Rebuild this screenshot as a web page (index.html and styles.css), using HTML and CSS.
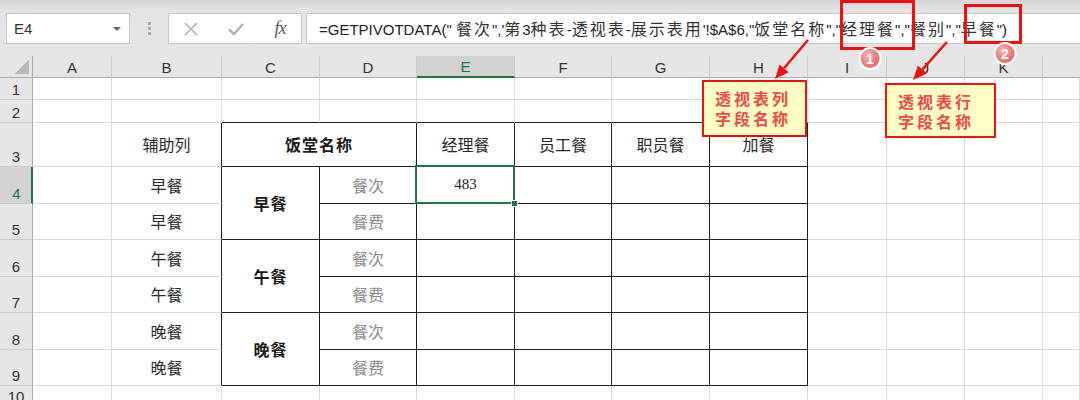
FILE: index.html
```html
<!DOCTYPE html>
<html lang="zh-CN">
<head>
<meta charset="utf-8">
<title>GETPIVOTDATA</title>
<link rel="stylesheet" href="styles.css">
</head>
<body>
<div class="topbar">
  <div class="namebox"><span>E4</span><span class="caret"></span></div>
  <div class="grip"><i></i><i></i><i></i></div>
  <div class="tools">
    <span class="tool"><svg width="16" height="16" viewBox="0 0 16 16"><path d="M2 2L14 14M14 2L2 14" stroke="#b0b0b0" stroke-width="1.6" fill="none"/></svg></span>
    <span class="tool"><svg width="18" height="16" viewBox="0 0 18 16"><path d="M2 8.5L7 13L16 3" stroke="#b0b0b0" stroke-width="2.4" fill="none"/></svg></span>
    <span class="tool fx">fx</span>
  </div>
  <div class="formula">=GETPIVOTDATA(" <span class="cj">餐次</span>",'<span class="cj">第</span>3<span class="cj">种表</span>-<span class="cj">透视表</span>-<span class="cj">展示表用</span>'!$A$6,"<span class="cj">饭堂名称</span>","<span class="cj">经理餐</span>","<span class="cj">餐别</span>","<span class="cj">早餐</span>")</div>
</div>

<div class="sheet">
  <!-- header row -->
  <div class="corner"></div>
  <div class="ch">A</div><div class="ch">B</div><div class="ch">C</div><div class="ch">D</div>
  <div class="ch on">E</div><div class="ch">F</div><div class="ch">G</div><div class="ch">H</div>
  <div class="ch">I</div><div class="ch">J</div><div class="ch">K</div><div class="ch last"></div>

  <!-- row 1 -->
  <div class="rh">1</div>
  <div class="c"></div><div class="c"></div><div class="c"></div><div class="c"></div><div class="c"></div><div class="c"></div><div class="c"></div><div class="c"></div><div class="c"></div><div class="c"></div><div class="c"></div><div class="c"></div>

  <!-- row 2 -->
  <div class="rh">2</div>
  <div class="c"></div><div class="c"></div>
  <div class="c bb"></div><div class="c bb"></div><div class="c bb"></div><div class="c bb"></div><div class="c bb"></div><div class="c bb"></div>
  <div class="c"></div><div class="c"></div><div class="c"></div><div class="c"></div>

  <!-- row 3 -->
  <div class="rh">3</div>
  <div class="c"></div>
  <div class="c br txt">辅助列</div>
  <div class="c t span2 txt bold">饭堂名称</div>
  <div class="c t txt">经理餐</div>
  <div class="c t txt">员工餐</div>
  <div class="c t txt">职员餐</div>
  <div class="c t txt">加餐</div>
  <div class="c"></div><div class="c"></div><div class="c"></div><div class="c"></div>

  <!-- row 4 -->
  <div class="rh on">4</div>
  <div class="c"></div>
  <div class="c br txt">早餐</div>
  <div class="c t rspan txt bold">早餐</div>
  <div class="c t txt gray">餐次</div>
  <div class="c t txt num selcell">483<span class="sel"></span><span class="handle"></span></div>
  <div class="c t"></div><div class="c t"></div><div class="c t"></div>
  <div class="c"></div><div class="c"></div><div class="c"></div><div class="c"></div>

  <!-- row 5 -->
  <div class="rh">5</div>
  <div class="c"></div>
  <div class="c br txt">早餐</div>
  <div class="c t txt gray">餐费</div>
  <div class="c t"></div><div class="c t"></div><div class="c t"></div><div class="c t"></div>
  <div class="c"></div><div class="c"></div><div class="c"></div><div class="c"></div>

  <!-- row 6 -->
  <div class="rh">6</div>
  <div class="c"></div>
  <div class="c br txt">午餐</div>
  <div class="c t rspan txt bold">午餐</div>
  <div class="c t txt gray">餐次</div>
  <div class="c t"></div><div class="c t"></div><div class="c t"></div><div class="c t"></div>
  <div class="c"></div><div class="c"></div><div class="c"></div><div class="c"></div>

  <!-- row 7 -->
  <div class="rh">7</div>
  <div class="c"></div>
  <div class="c br txt">午餐</div>
  <div class="c t txt gray">餐费</div>
  <div class="c t"></div><div class="c t"></div><div class="c t"></div><div class="c t"></div>
  <div class="c"></div><div class="c"></div><div class="c"></div><div class="c"></div>

  <!-- row 8 -->
  <div class="rh">8</div>
  <div class="c"></div>
  <div class="c br txt">晚餐</div>
  <div class="c t rspan txt bold">晚餐</div>
  <div class="c t txt gray">餐次</div>
  <div class="c t"></div><div class="c t"></div><div class="c t"></div><div class="c t"></div>
  <div class="c"></div><div class="c"></div><div class="c"></div><div class="c"></div>

  <!-- row 9 -->
  <div class="rh">9</div>
  <div class="c"></div>
  <div class="c br txt">晚餐</div>
  <div class="c t txt gray">餐费</div>
  <div class="c t"></div><div class="c t"></div><div class="c t"></div><div class="c t"></div>
  <div class="c"></div><div class="c"></div><div class="c"></div><div class="c"></div>

  <!-- row 10 -->
  <div class="rh top">10</div>
  <div class="c"></div><div class="c"></div><div class="c"></div><div class="c"></div><div class="c"></div><div class="c"></div><div class="c"></div><div class="c"></div><div class="c"></div><div class="c"></div><div class="c"></div><div class="c"></div>
</div>

<!-- annotations -->
<svg class="marks" width="1080" height="400" viewBox="0 0 1080 400">
  <defs>
    <radialGradient id="g1" cx="40%" cy="35%" r="70%">
      <stop offset="0" stop-color="#f9b3b3"/>
      <stop offset="1" stop-color="#e45a5a"/>
    </radialGradient>
  </defs>
  <rect x="841.5" y="1.5" width="72" height="47" fill="none" stroke="#f01010" stroke-width="3"/>
  <rect x="965.5" y="5.5" width="55" height="37" fill="none" stroke="#f01010" stroke-width="3"/>
  <line x1="808" y1="40" x2="784" y2="68.3" stroke="#f01010" stroke-width="2.5"/>
  <polygon points="775,79 788.6,72.2 779.5,64.4" fill="#f01010"/>
  <line x1="947" y1="42" x2="922.3" y2="69.6" stroke="#f01010" stroke-width="2.5"/>
  <polygon points="913,80 926.8,73.6 917.9,65.6" fill="#f01010"/>
  <circle cx="870" cy="58.5" r="10.5" fill="url(#g1)" stroke="#fff" stroke-width="2"/>
  <text x="870" y="63.5" class="dig">1</text>
  <circle cx="1005" cy="53.5" r="10.5" fill="url(#g1)" stroke="#fff" stroke-width="2"/>
  <text x="1005" y="58.5" class="dig">2</text>
</svg>
<div class="note n1">透视表列<br>字段名称</div>
<div class="note n2">透视表行<br>字段名称</div>
</body>
</html>
```

FILE: styles.css
```css
html, body {
  margin: 0;
  padding: 0;
}
body {
  width: 1080px;
  height: 400px;
  overflow: hidden;
  position: relative;
  background: #fff;
  font-family: "Liberation Sans", "Noto Sans CJK SC", sans-serif;
  color: #222;
}

/* ---------- top bar ---------- */
.topbar {
  height: 56px;
  box-sizing: border-box;
  padding-top: 13px;
  display: flex;
  align-items: flex-start;
  background: linear-gradient(#d6d6d6 0, #e4e4e4 10px, #e6e6e6 100%);
}
.namebox {
  margin-left: 6px;
  width: 124px;
  height: 31px;
  box-sizing: border-box;
  background: #fff;
  border: 1px solid #c9c9c9;
  display: flex;
  align-items: center;
  justify-content: space-between;
  padding: 0 8px 0 7px;
  font-size: 15px;
  color: #333;
}
.caret {
  width: 0;
  height: 0;
  border-left: 4px solid transparent;
  border-right: 4px solid transparent;
  border-top: 4px solid #666;
}
.grip {
  width: 38px;
  height: 31px;
  display: flex;
  flex-direction: column;
  align-items: center;
  justify-content: center;
  gap: 2px;
}
.grip i {
  display: block;
  width: 3px;
  height: 3px;
  background: #a8a8a8;
}
.tools {
  width: 134px;
  height: 31px;
  box-sizing: border-box;
  background: #fff;
  border: 1px solid #c9c9c9;
  display: grid;
  grid-template-columns: 44px 46px 42px;
  align-items: center;
  justify-items: center;
}
.tool {
  display: flex;
  align-items: center;
  justify-content: center;
}
.fx {
  font-family: "Liberation Serif", serif;
  font-style: italic;
  font-size: 18px;
  color: #555;
  letter-spacing: -1px;
}
.formula {
  flex: 1;
  margin-left: 4px;
  height: 31px;
  box-sizing: border-box;
  background: #fff;
  border: 1px solid #c9c9c9;
  border-right: none;
  padding-left: 12px;
  font-size: 15px;
  line-height: 29px;
  white-space: nowrap;
  overflow: hidden;
  color: #222;
}
.cj {
  font-family: "Noto Sans CJK SC", sans-serif;
  font-size: 16px;
  letter-spacing: 2px;
  color: #333;
}

/* ---------- sheet ---------- */
.sheet {
  display: grid;
  grid-template-columns: 33px 79px 110px 98px 97px 98px 97px 98px 98px 79px 78px 78px 1fr;
  grid-template-rows: 22px 22px 23px 44px 37px 36px 37px 36px 37px 36px 30px;
}
.sheet > div {
  box-sizing: border-box;
  min-width: 0;
}
.corner {
  background-color: #e6e6e6;
  border-right: 1px solid #ababab;
  border-bottom: 1px solid #ababab;
  background-image: linear-gradient(135deg, transparent 50%, #b9b9b9 50%);
  background-size: 14px 14px;
  background-position: right 3px bottom 3px;
  background-repeat: no-repeat;
}
.ch {
  background: #e6e6e6;
  border-right: 1px solid #cacaca;
  border-bottom: 1px solid #ababab;
  font-size: 15px;
  color: #333;
  display: flex;
  align-items: center;
  justify-content: center;
  padding-top: 1px;
}
.ch.on {
  background: #d2d2d2;
  border-bottom: 2px solid #217346;
  color: #217346;
}
.ch.last {
  border-right: none;
}
.rh {
  background: #e6e6e6;
  border-right: 1px solid #ababab;
  border-bottom: 1px solid #cacaca;
  font-size: 15px;
  color: #333;
  display: flex;
  align-items: flex-end;
  justify-content: center;
  padding-bottom: 1px;
}
.rh.on {
  background: #d2d2d2;
  border-right: 2px solid #217346;
  color: #217346;
  padding-left: 2px;
}
.rh.top {
  align-items: flex-start;
  padding-top: 2px;
}
.c {
  border-right: 1px solid #dadada;
  border-bottom: 1px solid #dadada;
}
.c.bb {
  border-bottom-color: #1e1e1e;
}
.c.br {
  border-right-color: #1e1e1e;
}
.c.t {
  border-right-color: #1e1e1e;
  border-bottom-color: #1e1e1e;
}
.span2 {
  grid-column: span 2;
}
.rspan {
  grid-row: span 2;
}
.txt {
  display: flex;
  align-items: center;
  justify-content: center;
  font-family: "Noto Sans CJK SC", sans-serif;
  font-size: 16px;
  color: #2a2a2a;
  padding-bottom: 1px;
}
.bold {
  font-weight: 700;
  letter-spacing: 1px;
  color: #1a1a1a;
}
.gray {
  color: #8a8a8a;
}
.num {
  font-family: "Liberation Serif", serif;
  font-size: 15px;
  color: #222;
}
.selcell {
  position: relative;
}
.sel {
  position: absolute;
  left: -2px;
  top: -2px;
  right: -1px;
  bottom: -1px;
  border: 2px solid #217346;
}
.handle {
  position: absolute;
  right: -4px;
  bottom: -4px;
  width: 5px;
  height: 5px;
  background: #217346;
  border: 1px solid #fff;
}

/* ---------- annotations ---------- */
.marks {
  position: absolute;
  left: 0;
  top: 0;
  pointer-events: none;
}
.dig {
  font-family: "Liberation Sans", sans-serif;
  font-size: 14px;
  font-weight: 700;
  fill: #fff;
  text-anchor: middle;
}
.note {
  position: absolute;
  box-sizing: border-box;
  background: #ffffc4;
  border: 2px solid #f01010;
  font-family: "Noto Sans CJK SC", sans-serif;
  font-weight: 700;
  font-size: 16px;
  line-height: 20px;
  letter-spacing: 3px;
  color: #f24848;
}
.n1 {
  left: 702px;
  top: 80px;
  width: 105px;
  height: 57px;
  padding: 6px 0 0 11px;
}
.n2 {
  left: 885px;
  top: 83px;
  width: 111px;
  height: 55px;
  padding: 6px 0 0 11px;
}
```
